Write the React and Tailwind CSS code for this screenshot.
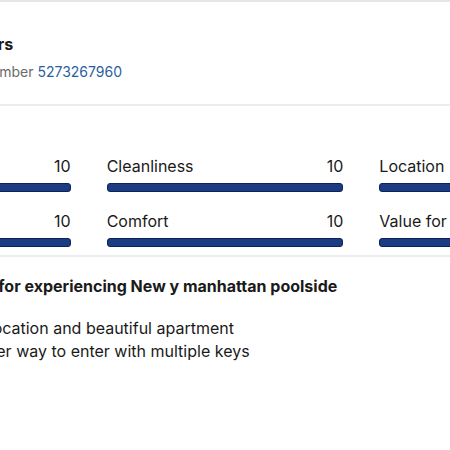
import { memo } from 'react';

const scores = [
  { label: 'Staff', score: 10 },
  { label: 'Cleanliness', score: 10 },
  { label: 'Location', score: 10 },
  { label: 'Facilities', score: 10 },
  { label: 'Comfort', score: 10 },
  { label: 'Value for money', score: 10 },
];

const ScoreBar = memo(({ label, score }) => (
  <div className="flex flex-col">
    <div className="flex items-center justify-between text-[16px] leading-[24px] text-[#1a1a1a]">
      <span>{label}</span>
      <span>{score}</span>
    </div>
    <div className="mt-[5px] h-[9px] rounded-[3px] border border-[#0d2257] bg-[#1b3b82]" style={{ width: `${score * 10}%` }} />
  </div>
));

ScoreBar.displayName = 'ScoreBar';

export default function App() {
  return (
    <div
      className="w-[450px] h-[450px] overflow-hidden bg-white border-t-2 border-[#e6e6e6]"
      style={{ fontFamily: 'Inter, "Noto Sans", sans-serif' }}
    >
      <div className="ml-[-166px] w-[782px]">
        <div className="pt-[30px] pb-[22px] border-b-2 border-[#ececec]">
          <h2 className="text-[16px] leading-[24px] font-bold text-[#1a1a1a]">Reviews from travelers</h2>
          <p className="mt-[6px] pl-[3px] text-[14px] leading-[20px] text-[#6b6b6b]">
            Vacation rental listing number <span className="text-[#2a5f9e]">5273267960</span>
          </p>
        </div>

        <div className="pt-[48px] pb-[8px] border-b-2 border-[#ececec] grid grid-cols-3 gap-x-[36px] gap-y-[17px]">
          {scores.map((s) => (
            <ScoreBar key={s.label} {...s} />
          ))}
        </div>

        <div className="pt-[17px]">
          <h3 className="text-[16px] leading-[24px] font-bold text-[#1a1a1a]">
            Perfect place to stay for experiencing New y manhattan poolside
          </h3>
          <div className="mt-[19px] pl-[18px] text-[16px] leading-[23px] text-[#1a1a1a]">
            <p>Pros: Really great location and beautiful apartment</p>
            <p>Cons: Needs a better way to enter with multiple keys</p>
          </div>
        </div>
      </div>
    </div>
  );
}
